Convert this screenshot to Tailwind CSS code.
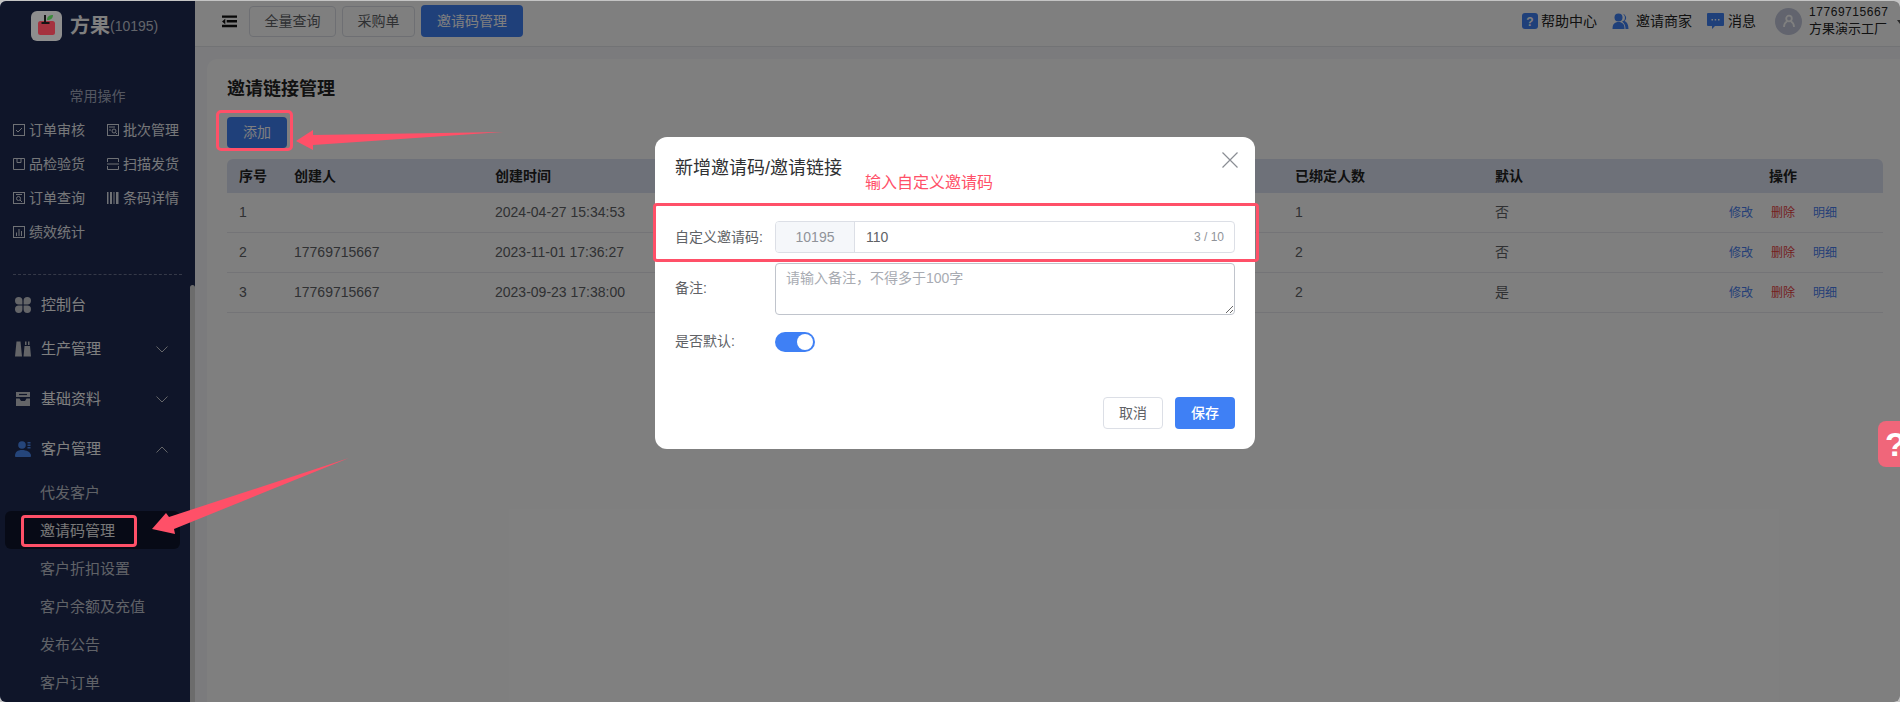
<!DOCTYPE html>
<html lang="zh">
<head>
<meta charset="utf-8">
<title>邀请码管理</title>
<script src="https://cdn.jsdelivr.net/npm/@tailwindcss/browser@4"></script>
</head>
<body class="m-0 bg-[#c4c4c4] overflow-hidden font-['Liberation_Sans','Noto_Sans_CJK_SC',sans-serif]">
<div class="relative w-[1900px] h-[702px] overflow-hidden">
  <div class="absolute inset-x-0 top-[1px] bottom-0 flex rounded-[6px] overflow-hidden bg-[#f6f7fb]">
    <!-- sidebar -->
    <aside class="relative w-[195px] h-[702px] shrink-0 bg-[#1e2a52] text-white -mt-[1px]">
      <div class="h-[54px] flex items-center pl-[31px] pb-[2px]">
        <div class="relative z-10 w-[31px] h-[30px] rounded-[6px] bg-[#8e8e8e] flex items-center justify-center">
          <svg viewBox="0 0 31 30" class="w-[31px] h-[30px]"><rect x="7" y="10" width="17" height="14" rx="2.500" fill="#a5323f"/><path d="M14 4v8M10.500 12h8" stroke="#151515" stroke-width="2" fill="none"/><path d="M16 9c0-4 3-5 6-5 0 3-2 5-6 5z" fill="#3c8a3c"/></svg>
        </div>
        <span class="ml-[8px] text-[20px] font-bold leading-none">方果</span><span class="text-[14px] text-[#c4c8d4] leading-none">(10195)</span>
      </div>
      <div class="mt-[27px] h-[30px] flex items-center justify-center text-[14px] text-[#a9afc2] w-[195px]">常用操作</div>
      <div class="mt-[2px] ml-[13px] grid grid-cols-[94px_80px] auto-rows-[34px] text-[14px] text-[#eceef3]">
        <div class="flex items-center gap-[4px]"><svg viewBox="0 0 12 12" class="w-[12px] h-[12px]" fill="none" stroke="#dfe2ea"><rect x=".5" y=".5" width="11" height="11"/><path d="M3 6l2 2 4-4"/></svg>订单审核</div>
        <div class="flex items-center gap-[4px]"><svg viewBox="0 0 12 12" class="w-[12px] h-[12px]" fill="none" stroke="#dfe2ea"><rect x=".5" y=".5" width="11" height="11"/><path d="M2 3h6"/><circle cx="7" cy="7" r="2"/><path d="M8.500 8.500l1.500 1.500M2 6h2"/></svg>批次管理</div>
        <div class="flex items-center gap-[4px]"><svg viewBox="0 0 12 12" class="w-[12px] h-[12px]" fill="none" stroke="#dfe2ea"><path d="M.5 11.500V.5h11v11zM4 .5v4h4v-4"/></svg>品检验货</div>
        <div class="flex items-center gap-[4px]"><svg viewBox="0 0 12 12" class="w-[12px] h-[12px]" fill="none" stroke="#dfe2ea"><path d="M.5 4V.5h11V4M0 6h12M.5 8v3.500h11V8"/></svg>扫描发货</div>
        <div class="flex items-center gap-[4px]"><svg viewBox="0 0 12 12" class="w-[12px] h-[12px]" fill="none" stroke="#dfe2ea"><rect x=".5" y=".5" width="11" height="11"/><path d="M3 2.500h6"/><circle cx="5.500" cy="6.500" r="2"/><path d="M7 8l2 2"/></svg>订单查询</div>
        <div class="flex items-center gap-[4px]"><svg viewBox="0 0 12 12" class="w-[12px] h-[12px]" fill="#dfe2ea"><path d="M0 0h1.500v12H0zM3 0h2v12H3zM6.500 0h1v12h-1zM9 0h2.500v12H9z"/></svg>条码详情</div>
        <div class="flex items-center gap-[4px]"><svg viewBox="0 0 12 12" class="w-[12px] h-[12px]" fill="none" stroke="#dfe2ea"><rect x=".5" y=".5" width="11" height="11"/><path d="M3.500 10V6.500M6 10V3M8.500 10V5"/></svg>绩效统计</div>
      </div>
      <div class="mt-[25px] mx-[13px] border-t border-dashed border-[#6a7290]"></div>
      <div class="mt-[9px] text-[15px]">
        <div class="h-[40px] flex items-center pl-[15px] pt-[2px] gap-[10px]"><svg viewBox="0 0 16 16" class="w-[16px] h-[16px]" fill="#c8cad0"><path d="M0 3.700A3.700 3.700 0 0 1 7.400 3.700V7.400H3.700A3.700 3.700 0 0 1 0 3.700zM16 3.700A3.700 3.700 0 0 0 8.600 3.700V7.400H12.300A3.700 3.700 0 0 0 16 3.700zM0 12.300A3.700 3.700 0 0 0 7.400 12.300V8.600H3.700A3.700 3.700 0 0 0 0 12.300zM16 12.300A3.700 3.700 0 0 1 8.600 12.300V8.600H12.300A3.700 3.700 0 0 1 16 12.300z"/></svg><span>控制台</span></div>
        <div class="h-[50px] flex items-center pl-[15px] gap-[10px]"><svg viewBox="0 0 16 16" class="w-[16px] h-[16px]" fill="#c8cad0"><path d="M1.500 .5h4l1.500 15H0zM10 .5h1.500v3.500H10zM13 .5h1.500v3.500H13zM9.500 5h5.500l1 10.500H8.500z"/></svg><span>生产管理</span><svg viewBox="0 0 12 7" class="absolute left-[156px] w-[12px] h-[7px]" fill="none" stroke="#c8cad0"><path d="M.5.500L6 6l5.500-5.500"/></svg></div>
        <div class="h-[50px] flex items-center pl-[15px] gap-[10px]"><svg viewBox="0 0 16 16" class="w-[16px] h-[16px]" fill="#c8cad0"><path d="M1 1h14v5H1zM1 7.500h3.500L6 10h4l1.500-2.500H15V15H1z"/><path d="M4 3.500h8" stroke="#1e2a52" stroke-width="1.200"/></svg><span>基础资料</span><svg viewBox="0 0 12 7" class="absolute left-[156px] w-[12px] h-[7px]" fill="none" stroke="#c8cad0"><path d="M.5.500L6 6l5.500-5.500"/></svg></div>
        <div class="h-[50px] flex items-center pl-[15px] gap-[10px]"><svg viewBox="0 0 16 16" class="w-[16px] h-[16px]" fill="#4a8af5"><circle cx="7" cy="4" r="3.800"/><path d="M0 15c0-4 2.500-6 7-6s9 2 9 6c0 .5-.5 1-1 1H1c-.5 0-1-.5-1-1z"/><path d="M12.500 1h3v1.500h-3zM12.500 3.500h3V5h-3zM12.500 6h3v1.500h-3z"/></svg><span>客户管理</span><svg viewBox="0 0 12 7" class="absolute left-[156px] w-[12px] h-[7px]" fill="none" stroke="#c8cad0"><path d="M.5 6.500L6 1l5.500 5.500"/></svg></div>
        <div class="text-[#c0c4cf]">
          <div class="h-[37px] pt-[2px] flex items-center pl-[40px]">代发客户</div>
          <div class="h-[38px] pt-[2px] flex items-center ml-[5px] w-[175px] pl-[35px] rounded-[6px] bg-[#0f152c] text-[#f0f0f0]">邀请码管理</div>
          <div class="h-[38px] pt-[2px] flex items-center pl-[40px]">客户折扣设置</div>
          <div class="h-[39px] pt-[2px] flex items-center pl-[40px]">客户余额及充值</div>
          <div class="h-[38px] flex items-center pl-[40px]">发布公告</div>
          <div class="h-[38px] flex items-center pl-[40px]">客户订单</div>
        </div>
      </div>
      <div class="absolute right-0 top-[285px] bottom-0 w-[5px] rounded-t-[3px] bg-[#d8d8d8]"></div>
    </aside>
    <!-- main -->
    <div class="flex-1 min-w-0 flex flex-col">
      <header class="h-[46px] shrink-0 bg-white border-b border-[#e4e6eb] flex items-center pb-[5px]">
        <svg viewBox="0 0 16 13" class="ml-[27px] w-[15px] h-[13px]" fill="#111"><path d="M0 0h16v2.500H0zM5 5h11v2.500H5zM0 10h16v2.500H0zM3.500 3.500v6L0 6.500z"/></svg>
        <div class="ml-[12px] flex items-center gap-[6px] text-[14px]">
          <div class="h-[31px] w-[87px] rounded-[4px] border border-[#dcdfe6] flex items-center justify-center text-[#606266]">全量查询</div>
          <div class="h-[31px] w-[73px] rounded-[4px] border border-[#dcdfe6] flex items-center justify-center text-[#606266]">采购单</div>
          <div class="h-[32px] w-[102px] rounded-[4px] bg-[#3f80f5] flex items-center justify-center text-white">邀请码管理</div>
        </div>
        <div class="ml-auto flex items-center text-[14px] text-[#222]">
          <svg viewBox="0 0 16 16" class="w-[16px] h-[16px]"><rect width="16" height="16" rx="3" fill="#3f80f5"/><text x="8" y="12.500" text-anchor="middle" font-size="12" font-weight="700" fill="#fff" font-family="Liberation Sans">?</text></svg>
          <span class="ml-[3px]">帮助中心</span>
          <svg viewBox="0 0 16 16" class="ml-[15px] w-[17px] h-[16px]" fill="#3f80f5"><circle cx="6" cy="4.500" r="4"/><path d="M0 16c0-5 2-7 6-7s6 2 6 7z"/><path d="M9.500.800A4 4 0 0 1 12 8c2.500 1 4 3.500 4 8h-3c0-3-1-6-3.500-7.500A4 4 0 0 0 9.500.800z"/></svg>
          <span class="ml-[7px]">邀请商家</span>
          <svg viewBox="0 0 17 16" class="ml-[15px] w-[17px] h-[16px]" fill="#3f80f5"><path d="M1 0h15a1 1 0 0 1 1 1v11a1 1 0 0 1-1 1H8l-3 3v-3H1a1 1 0 0 1-1-1V1a1 1 0 0 1 1-1z"/><path d="M4.500 6h1.500v1.500H4.500zM7.700 6h1.500v1.500H7.700zM11 6h1.500v1.500H11z" fill="#fff"/></svg>
          <span class="ml-[4px]">消息</span>
          <div class="ml-[19px] w-[27px] h-[27px] rounded-full bg-[#c4c9dc] flex items-center justify-center">
            <svg viewBox="0 0 14 14" class="w-[14px] h-[14px]" fill="none" stroke="#fff" stroke-width="1.800"><circle cx="7" cy="4.500" r="2.800"/><path d="M2 13c0-3 2-5 3-5.500M12 13c0-3-2-5-3-5.500"/></svg>
          </div>
          <div class="relative ml-[7px] w-[91px] shrink-0 flex flex-col leading-none text-[#222]">
            <span class="text-[12px] tracking-[0.55px] h-[15px] flex items-center">17769715667</span>
            <span class="text-[13px] h-[18px] flex items-center">方果演示工厂</span>
            <svg viewBox="0 0 6 4" class="absolute right-[-3px] top-[15px] w-[6px] h-[4px]" fill="#555"><path d="M0 0h6L3 4z"/></svg>
          </div>
        </div>
      </header>
      <div class="flex-1 pt-[12px] pl-[12px]">
        <div class="h-full rounded-tl-[10px] bg-white pl-[20px] pr-[17px] pt-[15px]">
          <div class="h-[30px] flex items-center text-[18px] font-bold text-[#222]">邀请链接管理</div>
          <div class="mt-[13px] w-[60px] h-[31px] rounded-[4px] bg-[#3f80f5] flex items-center justify-center text-[14px] text-white">添加</div>
          <div class="mt-[11px] text-[14px] text-[#606266]">
            <div class="h-[34px] grid grid-cols-[55px_201px_800px_200px_200px_200px] items-center rounded-t-[6px] bg-[#dde3f2] font-bold text-[#222]">
              <div class="pl-[12px]">序号</div><div class="pl-[12px]">创建人</div><div class="pl-[12px]">创建时间</div><div class="pl-[12px]">已绑定人数</div><div class="pl-[12px]">默认</div><div class="text-center">操作</div>
            </div>
            <div class="h-[40px] grid grid-cols-[55px_201px_800px_200px_200px_200px] items-center border-b border-[#e8e9ee]">
              <div class="pl-[12px]">1</div><div class="pl-[12px]"></div><div class="pl-[12px]">2024-04-27 15:34:53</div><div class="pl-[12px]">1</div><div class="pl-[12px]">否</div>
              <div class="flex justify-center gap-[18px] text-[12px] text-[#4a7ff0]"><span>修改</span><span class="text-[#e84040]">删除</span><span>明细</span></div>
            </div>
            <div class="h-[40px] grid grid-cols-[55px_201px_800px_200px_200px_200px] items-center border-b border-[#e8e9ee]">
              <div class="pl-[12px]">2</div><div class="pl-[12px]">17769715667</div><div class="pl-[12px]">2023-11-01 17:36:27</div><div class="pl-[12px]">2</div><div class="pl-[12px]">否</div>
              <div class="flex justify-center gap-[18px] text-[12px] text-[#4a7ff0]"><span>修改</span><span class="text-[#e84040]">删除</span><span>明细</span></div>
            </div>
            <div class="h-[40px] grid grid-cols-[55px_201px_800px_200px_200px_200px] items-center border-b border-[#e8e9ee]">
              <div class="pl-[12px]">3</div><div class="pl-[12px]">17769715667</div><div class="pl-[12px]">2023-09-23 17:38:00</div><div class="pl-[12px]">2</div><div class="pl-[12px]">是</div>
              <div class="flex justify-center gap-[18px] text-[12px] text-[#4a7ff0]"><span>修改</span><span class="text-[#e84040]">删除</span><span>明细</span></div>
            </div>
          </div>
        </div>
      </div>
    </div>
    <!-- dim overlay -->
    <div class="absolute inset-0 bg-black/50"></div>
  </div>

  <!-- help tab -->
  <div class="absolute left-[1878px] top-[421px] w-[30px] h-[46px] rounded-[8px] bg-[#f0667a] overflow-hidden flex items-center pl-[7px] text-[34px] font-bold text-white leading-none">?</div>

  <!-- modal -->
  <div class="absolute left-[655px] top-[137px] w-[600px] h-[312px] rounded-[12px] bg-white px-[20px] text-[14px] text-[#606266]">
    <div class="relative h-[62px] flex items-center text-[18px] text-[#303133]">新增邀请码/邀请链接
      <svg viewBox="0 0 16 16" class="absolute right-[-3px] top-[15px] w-[16px] h-[16px]" fill="none" stroke="#8a8d94" stroke-width="1.200"><path d="M.5.500l15 15M15.500.500l-15 15"/></svg>
    </div>
    <div class="mt-[22px] flex items-center">
      <label class="w-[100px] shrink-0">自定义邀请码:</label>
      <div class="flex-1 h-[32px] flex rounded-[4px] border border-[#dcdfe6] overflow-hidden">
        <div class="w-[79px] shrink-0 bg-[#f5f7fa] border-r border-[#dcdfe6] flex items-center justify-center text-[#909399]">10195</div>
        <div class="flex-1 flex items-center pl-[11px] pr-[10px]">
          <input class="flex-1 min-w-0 outline-none text-[#606266] text-[14px]" value="110">
          <span class="text-[12px] text-[#909399]">3 / 10</span>
        </div>
      </div>
    </div>
    <div class="mt-[10px] flex items-center">
      <label class="w-[100px] shrink-0 pb-[1px]">备注:</label>
      <textarea class="flex-1 h-[52px] rounded-[4px] border border-[#c0c4cc] px-[10px] py-[4px] outline-none text-[14px] placeholder:text-[#a8abb2]" placeholder="请输入备注，不得多于100字"></textarea>
    </div>
    <div class="mt-[16px] flex items-center">
      <label class="w-[100px] shrink-0">是否默认:</label>
      <div class="w-[40px] h-[20px] rounded-full bg-[#3f80f5] relative"><div class="absolute right-[2px] top-[2px] w-[16px] h-[16px] rounded-full bg-white"></div></div>
    </div>
    <div class="mt-[45px] flex justify-end gap-[12px]">
      <div class="w-[60px] h-[32px] rounded-[4px] border border-[#dcdfe6] flex items-center justify-center">取消</div>
      <div class="w-[60px] h-[32px] rounded-[4px] bg-[#3f80f5] flex items-center justify-center text-white font-medium">保存</div>
    </div>
  </div>

  <!-- annotations -->
  <div class="absolute left-[865px] top-[172px] text-[16px] leading-[22px] text-[#ff5068]">输入自定义邀请码</div>
  <div class="absolute left-[653px] top-[203px] w-[606px] h-[59px] rounded-[4px] border-[3px] border-[#ff5068]"></div>
  <div class="absolute left-[216px] top-[110px] w-[77px] h-[41px] rounded-[5px] border-[3px] border-[#ff5068]"></div>
  <div class="absolute left-[21px] top-[515px] w-[116px] h-[32px] rounded-[4px] border-[3px] border-[#ff5068]"></div>
  <svg class="absolute left-0 top-0 w-[1900px] h-[702px] pointer-events-none" viewBox="0 0 1900 702" fill="#ff5068">
    <polygon points="296,141 313,130 313,135 503,132 313,145 313,150"/>
    <polygon points="152,529 166,513 169,517 349,458 174,529 175,534"/>
  </svg>
</div>
</body>
</html>
